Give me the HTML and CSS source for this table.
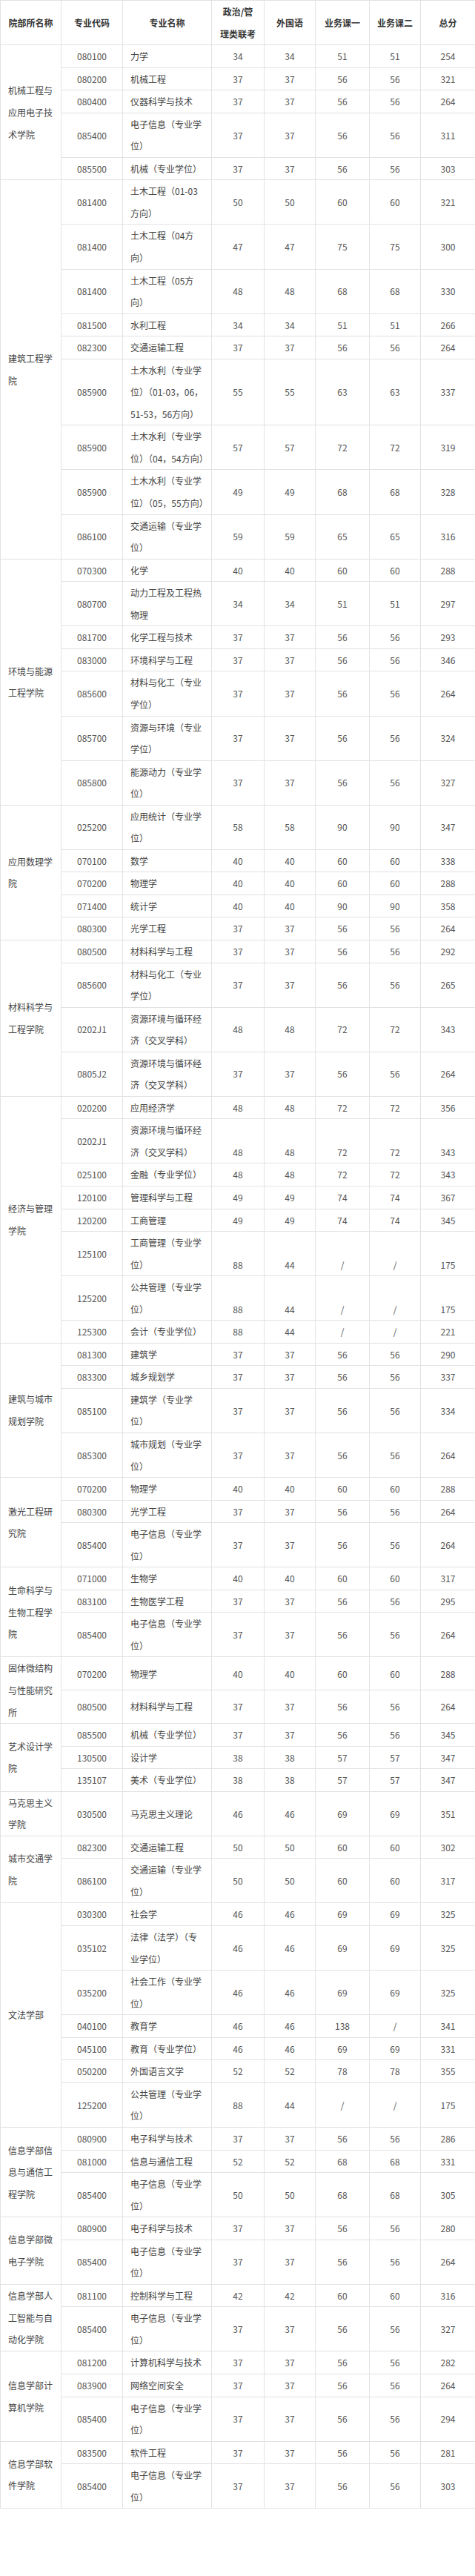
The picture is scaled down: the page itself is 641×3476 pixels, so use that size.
FILE: index.html
```html
<!DOCTYPE html>
<html lang="zh-CN">
<head>
<meta charset="utf-8">
<title>复试分数线</title>
<link rel="stylesheet" href="styles.css">
</head>
<body>
<table class="score">
<colgroup>
<col class="w1"><col class="w2"><col class="w3"><col class="w4"><col class="w5"><col class="w6"><col class="w7"><col class="w8">
</colgroup>
<thead>
<tr><th>院部所名称</th><th>专业代码</th><th>专业名称</th><th class="h4">政治/管理类联考</th><th>外国语</th><th>业务课一</th><th>业务课二</th><th>总分</th></tr>
</thead>
<tbody>
<tr><td class="dept" rowspan="5">机械工程与应用电子技术学院</td><td class="code">080100</td><td class="name">力学</td><td class="num">34</td><td class="num">34</td><td class="num">51</td><td class="num">51</td><td class="num">254</td></tr>
<tr><td class="code">080200</td><td class="name">机械工程</td><td class="num">37</td><td class="num">37</td><td class="num">56</td><td class="num">56</td><td class="num">321</td></tr>
<tr><td class="code">080400</td><td class="name">仪器科学与技术</td><td class="num">37</td><td class="num">37</td><td class="num">56</td><td class="num">56</td><td class="num">264</td></tr>
<tr><td class="code">085400</td><td class="name">电子信息（专业学位）</td><td class="num">37</td><td class="num">37</td><td class="num">56</td><td class="num">56</td><td class="num">311</td></tr>
<tr><td class="code">085500</td><td class="name">机械（专业学位）</td><td class="num">37</td><td class="num">37</td><td class="num">56</td><td class="num">56</td><td class="num">303</td></tr>

<tr><td class="dept" rowspan="9">建筑工程学院</td><td class="code">081400</td><td class="name">土木工程（01-03方向）</td><td class="num">50</td><td class="num">50</td><td class="num">60</td><td class="num">60</td><td class="num">321</td></tr>
<tr><td class="code">081400</td><td class="name">土木工程（04方向）</td><td class="num">47</td><td class="num">47</td><td class="num">75</td><td class="num">75</td><td class="num">300</td></tr>
<tr><td class="code">081400</td><td class="name">土木工程（05方向）</td><td class="num">48</td><td class="num">48</td><td class="num">68</td><td class="num">68</td><td class="num">330</td></tr>
<tr><td class="code">081500</td><td class="name">水利工程</td><td class="num">34</td><td class="num">34</td><td class="num">51</td><td class="num">51</td><td class="num">266</td></tr>
<tr><td class="code">082300</td><td class="name">交通运输工程</td><td class="num">37</td><td class="num">37</td><td class="num">56</td><td class="num">56</td><td class="num">264</td></tr>
<tr><td class="code">085900</td><td class="name">土木水利（专业学位）（01-03，06，51-53，56方向）</td><td class="num">55</td><td class="num">55</td><td class="num">63</td><td class="num">63</td><td class="num">337</td></tr>
<tr><td class="code">085900</td><td class="name">土木水利（专业学位）（04，54方向）</td><td class="num">57</td><td class="num">57</td><td class="num">72</td><td class="num">72</td><td class="num">319</td></tr>
<tr><td class="code">085900</td><td class="name">土木水利（专业学位）（05，55方向）</td><td class="num">49</td><td class="num">49</td><td class="num">68</td><td class="num">68</td><td class="num">328</td></tr>
<tr><td class="code">086100</td><td class="name">交通运输（专业学位）</td><td class="num">59</td><td class="num">59</td><td class="num">65</td><td class="num">65</td><td class="num">316</td></tr>

<tr><td class="dept" rowspan="7">环境与能源工程学院</td><td class="code">070300</td><td class="name">化学</td><td class="num">40</td><td class="num">40</td><td class="num">60</td><td class="num">60</td><td class="num">288</td></tr>
<tr><td class="code">080700</td><td class="name">动力工程及工程热物理</td><td class="num">34</td><td class="num">34</td><td class="num">51</td><td class="num">51</td><td class="num">297</td></tr>
<tr><td class="code">081700</td><td class="name">化学工程与技术</td><td class="num">37</td><td class="num">37</td><td class="num">56</td><td class="num">56</td><td class="num">293</td></tr>
<tr><td class="code">083000</td><td class="name">环境科学与工程</td><td class="num">37</td><td class="num">37</td><td class="num">56</td><td class="num">56</td><td class="num">346</td></tr>
<tr><td class="code">085600</td><td class="name">材料与化工（专业学位）</td><td class="num">37</td><td class="num">37</td><td class="num">56</td><td class="num">56</td><td class="num">264</td></tr>
<tr><td class="code">085700</td><td class="name">资源与环境（专业学位）</td><td class="num">37</td><td class="num">37</td><td class="num">56</td><td class="num">56</td><td class="num">324</td></tr>
<tr><td class="code">085800</td><td class="name">能源动力（专业学位）</td><td class="num">37</td><td class="num">37</td><td class="num">56</td><td class="num">56</td><td class="num">327</td></tr>

<tr><td class="dept" rowspan="5">应用数理学院</td><td class="code">025200</td><td class="name">应用统计（专业学位）</td><td class="num">58</td><td class="num">58</td><td class="num">90</td><td class="num">90</td><td class="num">347</td></tr>
<tr><td class="code">070100</td><td class="name">数学</td><td class="num">40</td><td class="num">40</td><td class="num">60</td><td class="num">60</td><td class="num">338</td></tr>
<tr><td class="code">070200</td><td class="name">物理学</td><td class="num">40</td><td class="num">40</td><td class="num">60</td><td class="num">60</td><td class="num">288</td></tr>
<tr><td class="code">071400</td><td class="name">统计学</td><td class="num">40</td><td class="num">40</td><td class="num">90</td><td class="num">90</td><td class="num">358</td></tr>
<tr><td class="code">080300</td><td class="name">光学工程</td><td class="num">37</td><td class="num">37</td><td class="num">56</td><td class="num">56</td><td class="num">264</td></tr>

<tr><td class="dept" rowspan="4">材料科学与工程学院</td><td class="code">080500</td><td class="name">材料科学与工程</td><td class="num">37</td><td class="num">37</td><td class="num">56</td><td class="num">56</td><td class="num">292</td></tr>
<tr><td class="code">085600</td><td class="name">材料与化工（专业学位）</td><td class="num">37</td><td class="num">37</td><td class="num">56</td><td class="num">56</td><td class="num">265</td></tr>
<tr><td class="code">0202J1</td><td class="name">资源环境与循环经济（交叉学科）</td><td class="num">48</td><td class="num">48</td><td class="num">72</td><td class="num">72</td><td class="num">343</td></tr>
<tr><td class="code">0805J2</td><td class="name">资源环境与循环经济（交叉学科）</td><td class="num">37</td><td class="num">37</td><td class="num">56</td><td class="num">56</td><td class="num">264</td></tr>

<tr><td class="dept" rowspan="8">经济与管理学院</td><td class="code">020200</td><td class="name">应用经济学</td><td class="num">48</td><td class="num">48</td><td class="num">72</td><td class="num">72</td><td class="num">356</td></tr>
<tr><td class="code">0202J1</td><td class="name">资源环境与循环经济（交叉学科）</td><td class="num low">48</td><td class="num low">48</td><td class="num low">72</td><td class="num low">72</td><td class="num low">343</td></tr>
<tr><td class="code">025100</td><td class="name">金融（专业学位）</td><td class="num">48</td><td class="num">48</td><td class="num">72</td><td class="num">72</td><td class="num">343</td></tr>
<tr><td class="code">120100</td><td class="name">管理科学与工程</td><td class="num">49</td><td class="num">49</td><td class="num">74</td><td class="num">74</td><td class="num">367</td></tr>
<tr><td class="code">120200</td><td class="name">工商管理</td><td class="num">49</td><td class="num">49</td><td class="num">74</td><td class="num">74</td><td class="num">345</td></tr>
<tr><td class="code">125100</td><td class="name">工商管理（专业学位）</td><td class="num low">88</td><td class="num low">44</td><td class="num low">/</td><td class="num low">/</td><td class="num low">175</td></tr>
<tr><td class="code">125200</td><td class="name">公共管理（专业学位）</td><td class="num low">88</td><td class="num low">44</td><td class="num low">/</td><td class="num low">/</td><td class="num low">175</td></tr>
<tr><td class="code">125300</td><td class="name">会计（专业学位）</td><td class="num">88</td><td class="num">44</td><td class="num">/</td><td class="num">/</td><td class="num">221</td></tr>

<tr><td class="dept" rowspan="4">建筑与城市规划学院</td><td class="code">081300</td><td class="name">建筑学</td><td class="num">37</td><td class="num">37</td><td class="num">56</td><td class="num">56</td><td class="num">290</td></tr>
<tr><td class="code">083300</td><td class="name">城乡规划学</td><td class="num">37</td><td class="num">37</td><td class="num">56</td><td class="num">56</td><td class="num">337</td></tr>
<tr><td class="code">085100</td><td class="name">建筑学（专业学位）</td><td class="num">37</td><td class="num">37</td><td class="num">56</td><td class="num">56</td><td class="num">334</td></tr>
<tr><td class="code">085300</td><td class="name">城市规划（专业学位）</td><td class="num">37</td><td class="num">37</td><td class="num">56</td><td class="num">56</td><td class="num">264</td></tr>

<tr><td class="dept" rowspan="3">激光工程研究院</td><td class="code">070200</td><td class="name">物理学</td><td class="num">40</td><td class="num">40</td><td class="num">60</td><td class="num">60</td><td class="num">288</td></tr>
<tr><td class="code">080300</td><td class="name">光学工程</td><td class="num">37</td><td class="num">37</td><td class="num">56</td><td class="num">56</td><td class="num">264</td></tr>
<tr><td class="code">085400</td><td class="name">电子信息（专业学位）</td><td class="num">37</td><td class="num">37</td><td class="num">56</td><td class="num">56</td><td class="num">264</td></tr>

<tr><td class="dept" rowspan="3">生命科学与生物工程学院</td><td class="code">071000</td><td class="name">生物学</td><td class="num">40</td><td class="num">40</td><td class="num">60</td><td class="num">60</td><td class="num">317</td></tr>
<tr><td class="code">083100</td><td class="name">生物医学工程</td><td class="num">37</td><td class="num">37</td><td class="num">56</td><td class="num">56</td><td class="num">295</td></tr>
<tr><td class="code">085400</td><td class="name">电子信息（专业学位）</td><td class="num">37</td><td class="num">37</td><td class="num">56</td><td class="num">56</td><td class="num">264</td></tr>

<tr><td class="dept" rowspan="2">固体微结构与性能研究所</td><td class="code">070200</td><td class="name">物理学</td><td class="num">40</td><td class="num">40</td><td class="num">60</td><td class="num">60</td><td class="num">288</td></tr>
<tr><td class="code">080500</td><td class="name">材料科学与工程</td><td class="num">37</td><td class="num">37</td><td class="num">56</td><td class="num">56</td><td class="num">264</td></tr>

<tr><td class="dept" rowspan="3">艺术设计学院</td><td class="code">085500</td><td class="name">机械（专业学位）</td><td class="num">37</td><td class="num">37</td><td class="num">56</td><td class="num">56</td><td class="num">345</td></tr>
<tr><td class="code">130500</td><td class="name">设计学</td><td class="num">38</td><td class="num">38</td><td class="num">57</td><td class="num">57</td><td class="num">347</td></tr>
<tr><td class="code">135107</td><td class="name">美术（专业学位）</td><td class="num">38</td><td class="num">38</td><td class="num">57</td><td class="num">57</td><td class="num">347</td></tr>

<tr><td class="dept">马克思主义学院</td><td class="code">030500</td><td class="name">马克思主义理论</td><td class="num">46</td><td class="num">46</td><td class="num">69</td><td class="num">69</td><td class="num">351</td></tr>

<tr><td class="dept" rowspan="2">城市交通学院</td><td class="code">082300</td><td class="name">交通运输工程</td><td class="num">50</td><td class="num">50</td><td class="num">60</td><td class="num">60</td><td class="num">302</td></tr>
<tr><td class="code">086100</td><td class="name">交通运输（专业学位）</td><td class="num">50</td><td class="num">50</td><td class="num">60</td><td class="num">60</td><td class="num">317</td></tr>

<tr><td class="dept" rowspan="7">文法学部</td><td class="code">030300</td><td class="name">社会学</td><td class="num">46</td><td class="num">46</td><td class="num">69</td><td class="num">69</td><td class="num">325</td></tr>
<tr><td class="code">035102</td><td class="name">法律（法学）（专业学位）</td><td class="num">46</td><td class="num">46</td><td class="num">69</td><td class="num">69</td><td class="num">325</td></tr>
<tr><td class="code">035200</td><td class="name">社会工作（专业学位）</td><td class="num">46</td><td class="num">46</td><td class="num">69</td><td class="num">69</td><td class="num">325</td></tr>
<tr><td class="code">040100</td><td class="name">教育学</td><td class="num">46</td><td class="num">46</td><td class="num">138</td><td class="num">/</td><td class="num">341</td></tr>
<tr><td class="code">045100</td><td class="name">教育（专业学位）</td><td class="num">46</td><td class="num">46</td><td class="num">69</td><td class="num">69</td><td class="num">331</td></tr>
<tr><td class="code">050200</td><td class="name">外国语言文学</td><td class="num">52</td><td class="num">52</td><td class="num">78</td><td class="num">78</td><td class="num">355</td></tr>
<tr><td class="code">125200</td><td class="name">公共管理（专业学位）</td><td class="num">88</td><td class="num">44</td><td class="num">/</td><td class="num">/</td><td class="num">175</td></tr>

<tr><td class="dept" rowspan="3">信息学部信息与通信工程学院</td><td class="code">080900</td><td class="name">电子科学与技术</td><td class="num">37</td><td class="num">37</td><td class="num">56</td><td class="num">56</td><td class="num">286</td></tr>
<tr><td class="code">081000</td><td class="name">信息与通信工程</td><td class="num">52</td><td class="num">52</td><td class="num">68</td><td class="num">68</td><td class="num">331</td></tr>
<tr><td class="code">085400</td><td class="name">电子信息（专业学位）</td><td class="num">50</td><td class="num">50</td><td class="num">68</td><td class="num">68</td><td class="num">305</td></tr>

<tr><td class="dept" rowspan="2">信息学部微电子学院</td><td class="code">080900</td><td class="name">电子科学与技术</td><td class="num">37</td><td class="num">37</td><td class="num">56</td><td class="num">56</td><td class="num">280</td></tr>
<tr><td class="code">085400</td><td class="name">电子信息（专业学位）</td><td class="num">37</td><td class="num">37</td><td class="num">56</td><td class="num">56</td><td class="num">264</td></tr>

<tr><td class="dept" rowspan="2">信息学部人工智能与自动化学院</td><td class="code">081100</td><td class="name">控制科学与工程</td><td class="num">42</td><td class="num">42</td><td class="num">60</td><td class="num">60</td><td class="num">316</td></tr>
<tr><td class="code">085400</td><td class="name">电子信息（专业学位）</td><td class="num">37</td><td class="num">37</td><td class="num">56</td><td class="num">56</td><td class="num">327</td></tr>

<tr><td class="dept" rowspan="3">信息学部计算机学院</td><td class="code">081200</td><td class="name">计算机科学与技术</td><td class="num">37</td><td class="num">37</td><td class="num">56</td><td class="num">56</td><td class="num">282</td></tr>
<tr><td class="code">083900</td><td class="name">网络空间安全</td><td class="num">37</td><td class="num">37</td><td class="num">56</td><td class="num">56</td><td class="num">264</td></tr>
<tr><td class="code">085400</td><td class="name">电子信息（专业学位）</td><td class="num">37</td><td class="num">37</td><td class="num">56</td><td class="num">56</td><td class="num">294</td></tr>

<tr><td class="dept" rowspan="2">信息学部软件学院</td><td class="code">083500</td><td class="name">软件工程</td><td class="num">37</td><td class="num">37</td><td class="num">56</td><td class="num">56</td><td class="num">281</td></tr>
<tr><td class="code">085400</td><td class="name">电子信息（专业学位）</td><td class="num">37</td><td class="num">37</td><td class="num">56</td><td class="num">56</td><td class="num">303</td></tr>
</tbody>
</table>
</body>
</html>
```

FILE: styles.css
```css
html, body {
  margin: 0;
  padding: 0;
  background: #ffffff;
}

body {
  font-family: "Noto Sans CJK SC", "Microsoft YaHei", sans-serif;
  font-size: 12px;
  color: #555555;
}

.score {
  width: 641px;
  table-layout: fixed;
  border-collapse: collapse;
}

.w1 { width: 82px; }
.w2 { width: 83px; }
.w3 { width: 120px; }
.w4 { width: 71px; }
.w5 { width: 69px; }
.w6 { width: 73px; }
.w7 { width: 69px; }
.w8 { width: 74px; }

.score th,
.score td {
  border: 1px solid #e2e2e2;
  line-height: 29.55px;
  padding: 0 4px;
  vertical-align: middle;
  word-break: normal;
}

.score th {
  font-weight: bold;
  color: #333333;
  text-align: center;
}

.score th.h4 {
  padding: 0 10px;
}

.dept {
  text-align: left;
  padding: 0 8px 0 10px !important;
  color: #444444;
}

.code {
  text-align: center;
}

.name {
  text-align: left;
  padding: 0 8px 0 10px !important;
  color: #444444;
}

.num {
  text-align: center;
}

.num.low {
  vertical-align: bottom;
}
```
